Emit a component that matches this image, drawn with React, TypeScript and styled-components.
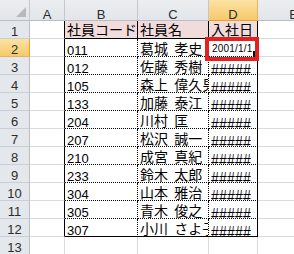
import React from 'react';
import styled, { createGlobalStyle, css } from 'styled-components';

type Edge = 'grid' | 'solid' | 'dot';

const GlobalStyle = createGlobalStyle`
  html, body { margin: 0; padding: 0; background: #ffffff; overflow: hidden; }
  #root { width: 294px; height: 254px; overflow: hidden; }
`;

const edge = (e: Edge) =>
  e === 'solid' ? '1px solid #000000' : e === 'dot' ? '1px dotted #000000' : '1px solid #d9dbde';

const Sheet = styled.div`
  position: relative;
  display: grid;
  grid-template-columns: 30px 35px 73px 71px 49px 72px;
  grid-template-rows: 21px repeat(13, 18px);
  width: 330px;
  font-family: "Noto Sans CJK JP", sans-serif;
  color: #000;
`;

const headBase = css`
  box-sizing: border-box;
  font-family: "Liberation Sans", Arial, sans-serif;
  font-size: 13px;
  line-height: 13px;
  color: #2c2c2c;
  text-align: center;
  overflow: hidden;
`;

const Corner = styled.div`
  ${headBase};
  background: linear-gradient(#eceef1, #e2e5e9);
  border-right: 1px solid #c3c8ce;
  border-bottom: 1px solid #b9bec5;
  display: flex;
  align-items: flex-end;
  justify-content: flex-end;
  padding: 0 3px 3px 0;
`;

const ColHead = styled.div<{ $sel?: boolean }>`
  ${headBase};
  padding-top: 8px;
  background: ${(p) => (p.$sel ? 'linear-gradient(#fbe3a4, #f6c96b)' : 'linear-gradient(#eceef1, #e2e5e9)')};
  border-right: 1px solid ${(p) => (p.$sel ? '#e9b25a' : '#c3c8ce')};
  border-bottom: 1px solid ${(p) => (p.$sel ? '#f29c2b' : '#b9bec5')};
`;

const RowHead = styled.div<{ $sel?: boolean }>`
  ${headBase};
  padding-top: 4px;
  background: ${(p) => (p.$sel ? 'linear-gradient(#fbe3a4, #f6c96b)' : '#e4e7eb')};
  border-right: 1px solid ${(p) => (p.$sel ? '#f29c2b' : '#b9bec5')};
  border-bottom: 1px solid ${(p) => (p.$sel ? '#e9b25a' : '#c9ced4')};
`;

const Cell = styled.div<{ $r: Edge; $b: Edge; $bg?: string }>`
  box-sizing: border-box;
  overflow: hidden;
  white-space: nowrap;
  background: ${(p) => p.$bg || '#ffffff'};
  border-right: ${(p) => edge(p.$r)};
  border-bottom: ${(p) => edge(p.$b)};
`;

const Title = styled.div`
  font-family: "Noto Sans CJK JP", sans-serif;
  font-size: 14px;
  line-height: 14px;
  padding: 1px 0 0 2px;
`;

const Code = styled.div`
  font-family: "Liberation Sans", Arial, sans-serif;
  font-size: 13px;
  line-height: 13px;
  padding: 5px 0 0 2px;
`;

const Name = styled.div`
  font-family: "Noto Sans CJK JP", sans-serif;
  font-size: 14px;
  line-height: 14px;
  word-spacing: 3px;
  padding: 2px 0 0 2px;
`;

const Hash = styled.div`
  display: inline-block;
  font-family: "Liberation Sans", Arial, sans-serif;
  font-size: 14px;
  line-height: 14px;
  letter-spacing: 0.2px;
  margin: 2px 0 0 2px;
  transform: scaleY(1.22);
  transform-origin: 0 12px;
`;

const DateText = styled.div`
  font-family: "Liberation Sans", Arial, sans-serif;
  font-size: 10px;
  line-height: 10px;
  letter-spacing: 0.2px;
  padding: 5px 0 0 3px;
`;

const Highlight = styled.div`
  position: absolute;
  left: 205px;
  top: 37px;
  width: 54px;
  height: 24px;
  box-sizing: border-box;
  border: 4px solid #e5201f;
  z-index: 2;
`;

const FillHandle = styled.div`
  position: absolute;
  left: 253px;
  top: 51px;
  width: 5px;
  height: 6px;
  background: #000;
  z-index: 1;
`;

const rows: [string, string][] = [
  ['011', '葛城 孝史'],
  ['012', '佐藤 秀樹'],
  ['105', '森上 偉久男'],
  ['133', '加藤 泰江'],
  ['204', '川村 匡'],
  ['207', '松沢 誠一'],
  ['210', '成宮 真紀'],
  ['233', '鈴木 太郎'],
  ['304', '山本 雅治'],
  ['305', '青木 俊之'],
  ['307', '小川 さよ子'],
];

const Triangle = () => (
  <svg width="10" height="10" viewBox="0 0 10 10">
    <polygon points="10,0 10,10 0,10" fill="#b5b9be" />
  </svg>
);

export default function App() {
  return (
    <>
      <GlobalStyle />
      <Sheet>
        <Corner>
          <Triangle />
        </Corner>
        <ColHead>A</ColHead>
        <ColHead>B</ColHead>
        <ColHead>C</ColHead>
        <ColHead $sel>D</ColHead>
        <ColHead>E</ColHead>

        <RowHead>1</RowHead>
        <Cell $r="solid" $b="grid" />
        <Cell $r="solid" $b="solid" $bg="#f2dcdb">
          <Title>社員コード</Title>
        </Cell>
        <Cell $r="solid" $b="solid" $bg="#f2dcdb">
          <Title>社員名</Title>
        </Cell>
        <Cell $r="solid" $b="solid" $bg="#f2dcdb">
          <Title>入社日</Title>
        </Cell>
        <Cell $r="grid" $b="grid" />

        {rows.map(([code, name], i) => {
          const last = i === rows.length - 1;
          const b: Edge = last ? 'solid' : 'dot';
          return (
            <React.Fragment key={code}>
              <RowHead $sel={i === 0}>{i + 2}</RowHead>
              <Cell $r="solid" $b="grid" />
              <Cell $r="dot" $b={b}>
                <Code>{code}</Code>
              </Cell>
              <Cell $r="dot" $b={b}>
                <Name>{name}</Name>
              </Cell>
              <Cell $r="solid" $b={b}>
                {i === 0 ? <DateText>2001/1/1</DateText> : <Hash>#####</Hash>}
              </Cell>
              <Cell $r="grid" $b="grid" />
            </React.Fragment>
          );
        })}

        <RowHead>13</RowHead>
        <Cell $r="grid" $b="grid" />
        <Cell $r="grid" $b="grid" />
        <Cell $r="grid" $b="grid" />
        <Cell $r="grid" $b="grid" />
        <Cell $r="grid" $b="grid" />

        <FillHandle />
        <Highlight />
      </Sheet>
    </>
  );
}
